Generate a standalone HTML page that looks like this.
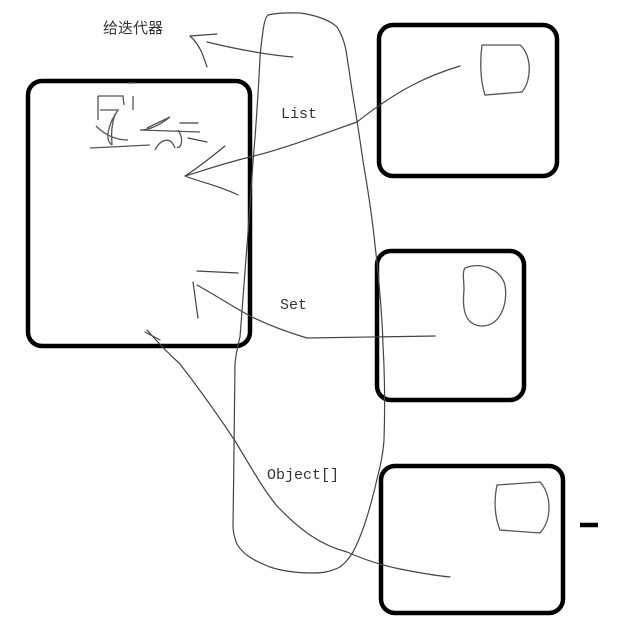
<!DOCTYPE html>
<html><head><meta charset="utf-8"><style>
html,body{margin:0;padding:0;background:#fff;}
svg{display:block}
text{font-family:"Liberation Mono","Noto Sans CJK SC",monospace;fill:#333}
</style></head><body>
<svg width="624" height="642" viewBox="0 0 624 642">
<g fill="none" stroke="#000" stroke-width="4.5">
<rect x="28" y="81" width="222" height="265" rx="14"/>
<rect x="379" y="25" width="178" height="151" rx="14"/>
<rect x="377" y="251" width="147" height="149" rx="14"/>
<rect x="381" y="466" width="182" height="147" rx="14"/>
<line x1="580" y1="525" x2="598" y2="525"/>
</g>
<g fill="none" stroke="#444" stroke-width="1.2" stroke-linecap="round" stroke-linejoin="round">
<path d="M268 15 C280 12 295 13 300 13 C315 15 330 20 337 27 C344 38 346 48 347 57 C350 75 351 85 353 96 C357 120 360 140 363 161 C368 190 372 215 375 245 C379 280 382 310 383 345 C385 380 385 410 384 440 C383 455 380 468 377 479 C370 510 362 535 353 552 C348 560 345 563 340 567 C330 572 322 573 313 573 C295 573 282 571 270 567 C255 561 243 555 237 544 C234 537 233 532 233 525 C234 470 234 410 235 364 C236 352 238 345 240 337 C243 300 245 270 247 245 C250 210 252 170 255 138 C257 110 259 80 260 57 C261 45 262 38 263 31 C264 24 265 18 268 15Z"/>
<path d="M460 66 C430 75 400 88 357 122 C320 135 280 150 250 157 C225 163 205 170 185 176"/>
<path d="M225 146 C210 158 198 168 185 176 C200 182 220 186 238 195"/>
<path d="M197 271 L238 273"/>
<path d="M193 282 C195 295 196 305 198 318"/>
<path d="M197 285 C215 295 235 308 250 316 C270 326 290 333 307 338 L435 336"/>
<path d="M147 330 C160 345 170 355 180 364 C200 390 218 415 235 441 C250 465 262 488 277 506 C300 530 320 545 347 552 C365 560 385 566 400 569 C420 573 440 576 450 577"/>
<path d="M145 332 L160 340"/>
<path d="M190 36 C200 45 203 55 207 67"/>
<path d="M190 36 L217 34"/>
<path d="M207 42 C240 50 270 55 293 57"/>
<path d="M180 123 L198 123"/>
<path d="M188 138 L207 142"/>
</g>
<g fill="none" stroke="#555" stroke-width="1.3">
<path d="M482 45 L520 45 C532 55 532 80 522 92 L485 95 C480 80 480 60 482 45Z"/>
<path d="M465 268 C480 262 500 268 505 285 C508 305 500 325 483 326 C465 326 462 310 464 290 C464 280 462 272 465 268Z"/>
<path d="M497 485 L540 482 C552 495 552 520 540 533 L500 530 C494 515 494 500 497 485Z"/>
<path d="M98 96 L123 96 L124 105 M98 96 L98 120 M100 110 L118 110 L112 120 C108 130 105 140 112 145 M115 114 C110 130 112 140 112 145 M90 148 L150 145 M96 126 C105 135 115 140 128 140 M133 96 L133 110 M128 83 L135 83 M147 128 L170 117 C160 125 150 130 140 130 L200 132 M155 150 C160 140 170 135 175 148 M178 130 C185 140 180 150 177 147"/>
</g>
<text x="103" y="33" font-size="15">给迭代器</text>
<text x="281" y="118" font-size="15">List</text>
<text x="280" y="309" font-size="15">Set</text>
<text x="267" y="479" font-size="15">Object[]</text>
</svg>
</body></html>
